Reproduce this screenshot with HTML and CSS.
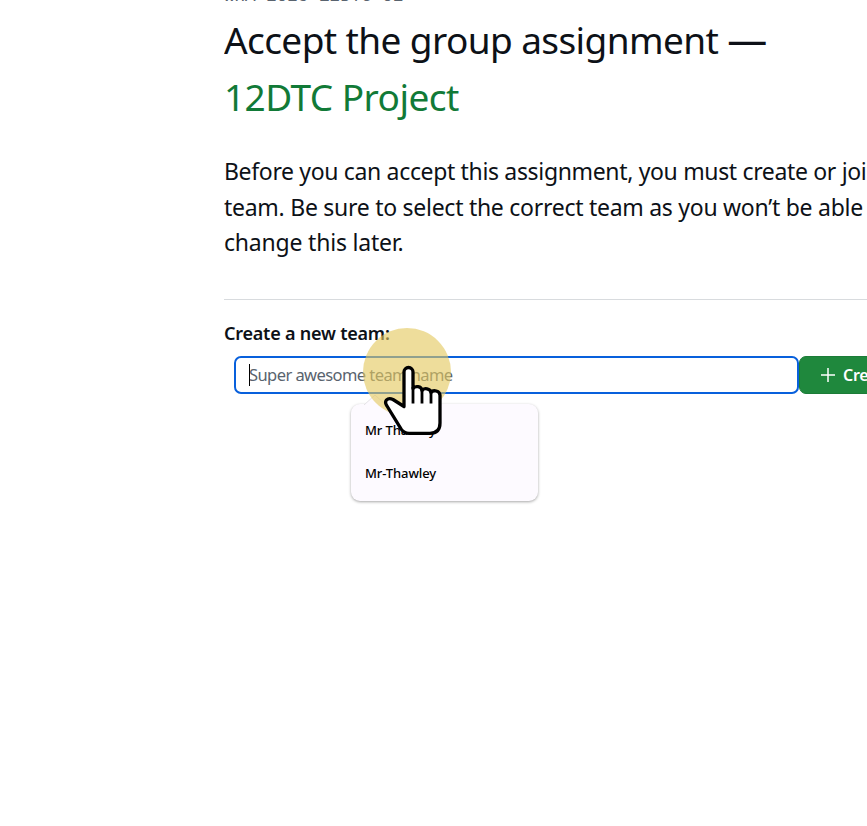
FILE: index.html
```html
<!DOCTYPE html>
<html lang="en">
<head>
  <meta charset="UTF-8">
  <meta name="viewport" content="width=device-width, initial-scale=1.0">
  <title>Accept the group assignment</title>
  <link rel="stylesheet" href="styles.css">
</head>
<body>
  <main class="container">
    <p class="classroom">WHA-2025-12DTC-02</p>
    <h1><span class="line title">Accept the group assignment <span class="dash">—</span></span> <span class="line project">12DTC Project</span></h1>
    <div class="lead">
      <span class="line lead-one">Before you can accept this assignment, you must create or join a</span>
      <span class="line lead-two">team. Be sure to select the correct team as you won’t be able to</span>
      <span class="line lead-three">change this later.</span>
    </div>
    <form class="team-form">
      <label class="team-label" for="team-name">Create a new team:</label>
      <div class="team-row">
        <div class="field">
          <input type="text" id="team-name" placeholder="Super awesome team name">
          <span class="caret"></span>
          <div class="suggestions">
            <svg class="arrow" width="22" height="11" viewBox="0 0 22 11"><path d="M0 11 11 1l11 10" fill="#fdfaff" stroke="#e4e2e6"/></svg>
            <div class="suggestion">Mr Thawley</div>
            <div class="suggestion">Mr-Thawley</div>
          </div>
          <div class="highlight"></div>
          <svg class="pointer" width="60" height="74" viewBox="0 0 60 74">
            <path d="M20 42.500V8a4.500 4.500 0 0 1 9 0V24.500c2-3 8.500-2.500 9 2 2-3 8.500-2 9 2 2-3 9-2 9 3V59c0 7-4 10.300-10 10.300H25c-4 0-6-1.500-8-4.500L3 42c-3.500-5 .5-9 6-6.500z" fill="#fff" stroke="#000" stroke-width="3.300" stroke-linejoin="round"/>
            <path d="M29 23v16.500M38 25v14.500M47 27v12.500" fill="none" stroke="#000" stroke-width="2.800"/>
          </svg>
        </div>
        <button type="button" class="create">
          <svg width="14" height="14" viewBox="0 0 14 14"><path d="M7 0v14M0 7h14" stroke="#fff" stroke-width="1.500"/></svg>
          <span>Create team</span>
        </button>
      </div>
    </form>
  </main>
</body>
</html>
```

FILE: styles.css
```css
body {
  margin: 0;
  font-family: "Noto Sans", "Open Sans", sans-serif;
  color: #0d1117;
  background-color: #fff;
  overflow: hidden;
  height: 826px;
}
.container {
  margin-left: 224px;
  height: 826px;
  overflow: hidden;
}
.classroom {
  margin: -18px 0 0;
  height: 29px;
  font-family: "Liberation Mono", monospace;
  font-size: 17.600px;
  line-height: 29px;
  color: #59636e;
}
h1 {
  margin: 0;
  font-size: 37px;
  font-weight: 400;
  line-height: 57px;
}
.line {
  display: block;
  white-space: nowrap;
}
.title {
  letter-spacing: -0.6px;
}
.dash {
  font-size: 40px;
  line-height: 1;
}
.project {
  letter-spacing: -0.55px;
  color: #117a37;
}
.lead {
  margin-top: 29px;
  padding-bottom: 38px;
  border-bottom: 1px solid #d8dbde;
  font-size: 23px;
  line-height: 35.500px;
}
.lead-one {
  letter-spacing: -0.34px;
}
.lead-two {
  letter-spacing: -0.27px;
}
.lead-three {
  letter-spacing: -0.2px;
}
.team-label {
  display: block;
  margin-top: 19px;
  font-size: 18px;
  font-weight: 600;
  letter-spacing: -0.22px;
  line-height: 28px;
}
.team-row {
  display: flex;
  margin: 9px 0 0 10px;
}
.field {
  position: relative;
  flex-shrink: 0;
  width: 565px;
}
.field input {
  display: block;
  box-sizing: border-box;
  width: 565px;
  height: 38px;
  padding: 0 13px;
  border: 2px solid #0860dc;
  border-radius: 7px;
  font-family: inherit;
  font-size: 16.500px;
  letter-spacing: -0.57px;
}
.field input::placeholder {
  color: #59636e;
  opacity: 1;
}
.caret {
  position: absolute;
  left: 15px;
  top: 8px;
  width: 1px;
  height: 22px;
  background-color: #000;
}
.create {
  display: flex;
  flex-shrink: 0;
  align-items: center;
  gap: 8px;
  width: 160px;
  height: 38px;
  padding: 0 21px;
  border: 1px solid #1c7c38;
  border-radius: 7px;
  background-color: #1f883d;
  color: #fff;
  font-family: inherit;
  font-size: 16px;
  font-weight: 600;
  letter-spacing: -0.3px;
  white-space: nowrap;
}
.create svg {
  flex-shrink: 0;
}
.suggestions {
  position: absolute;
  left: 117px;
  top: 48px;
  box-sizing: border-box;
  width: 187px;
  height: 97px;
  padding: 5px 14px;
  border-radius: 9px;
  background-color: #fdfaff;
  box-shadow: 0 1px 3px rgba(0, 0, 0, 0.35);
  font-size: 13px;
  font-weight: 500;
  letter-spacing: -0.1px;
  color: #000;
}
.arrow {
  position: absolute;
  left: 13px;
  top: -10px;
}
.suggestion {
  height: 43px;
  line-height: 43px;
}
.highlight {
  position: absolute;
  left: 129px;
  top: -28px;
  width: 88px;
  height: 88px;
  border-radius: 50%;
  background-color: rgba(228, 200, 94, 0.62);
}
.pointer {
  position: absolute;
  left: 150px;
  top: 8px;
}
```
